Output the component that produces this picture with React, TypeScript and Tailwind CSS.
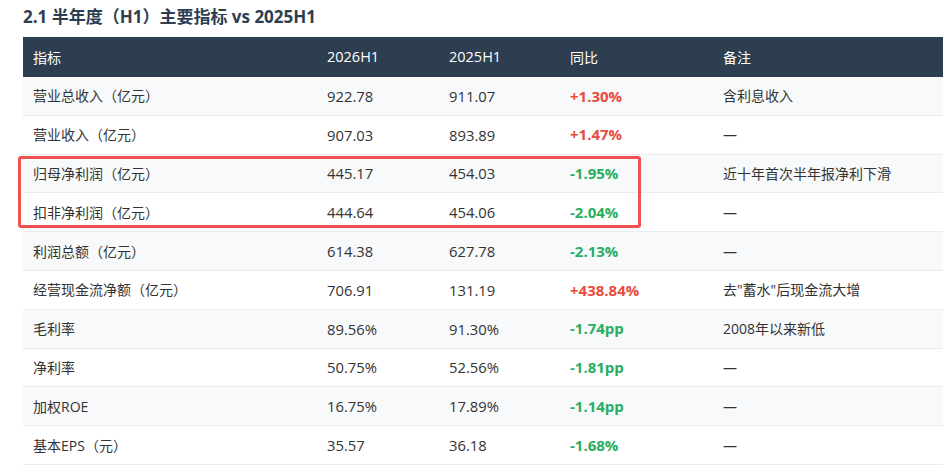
const rows = [
  { name: "营业总收入（亿元）", a: "922.78", b: "911.07", yoy: "+1.30%", up: true, note: "含利息收入" },
  { name: "营业收入（亿元）", a: "907.03", b: "893.89", yoy: "+1.47%", up: true, note: "—" },
  { name: "归母净利润（亿元）", a: "445.17", b: "454.03", yoy: "-1.95%", up: false, note: "近十年首次半年报净利下滑" },
  { name: "扣非净利润（亿元）", a: "444.64", b: "454.06", yoy: "-2.04%", up: false, note: "—" },
  { name: "利润总额（亿元）", a: "614.38", b: "627.78", yoy: "-2.13%", up: false, note: "—" },
  { name: "经营现金流净额（亿元）", a: "706.91", b: "131.19", yoy: "+438.84%", up: true, note: "去\"蓄水\"后现金流大增" },
  { name: "毛利率", a: "89.56%", b: "91.30%", yoy: "-1.74pp", up: false, note: "2008年以来新低" },
  { name: "净利率", a: "50.75%", b: "52.56%", yoy: "-1.81pp", up: false, note: "—" },
  { name: "加权ROE", a: "16.75%", b: "17.89%", yoy: "-1.14pp", up: false, note: "—" },
  { name: "基本EPS（元）", a: "35.57", b: "36.18", yoy: "-1.68%", up: false, note: "—" },
];

const App = () => {
  return (
    <div
      className="w-[943px] h-[475px] overflow-hidden bg-white pl-[23px] text-[#333]"
      style={{ fontFamily: '"Open Sans", "Noto Sans CJK SC", sans-serif' }}
    >
      <h2 className="h-[37px] pt-[5px] text-[17px] leading-[24px] font-bold text-[#2c3e50]">
        2.1 半年度（H1）主要指标 vs 2025H1
      </h2>
      <div className="relative w-[960px]">
        <div className="flex h-[40px] items-center bg-[#2c3e50] text-[14px] text-white">
          <div className="w-[294px] pl-[10px]">指标</div>
          <div className="w-[122px] pl-[10px] text-[14.5px]">2026H1</div>
          <div className="w-[121px] pl-[10px] text-[14.5px]">2025H1</div>
          <div className="w-[153px] pl-[10px]">同比</div>
          <div className="flex-1 pl-[10px]">备注</div>
        </div>
        {rows.map((r, i) => (
          <div
            key={r.name}
            className={`flex h-[38.8px] items-center border-b border-[#e9ecef] text-[14px] ${
              i % 2 === 0 ? "bg-[#f8f9fa]" : "bg-white"
            }`}
          >
            <div className="w-[294px] pl-[10px]">{r.name}</div>
            <div className="w-[122px] pl-[10px] text-[14.8px]">{r.a}</div>
            <div className="w-[121px] pl-[10px] text-[14.8px]">{r.b}</div>
            <div
              className={`w-[153px] pl-[10px] text-[15px] font-bold ${
                r.up ? "text-[#e74c3c]" : "text-[#27ae60]"
              }`}
            >
              {r.yoy}
            </div>
            <div className="flex-1 pl-[10px]">{r.note}</div>
          </div>
        ))}
        <div className="pointer-events-none absolute left-[-5px] top-[119px] h-[72px] w-[623px] rounded-[3px] border-[3px] border-[#ef5350]" />
      </div>
    </div>
  );
};

export default App;
